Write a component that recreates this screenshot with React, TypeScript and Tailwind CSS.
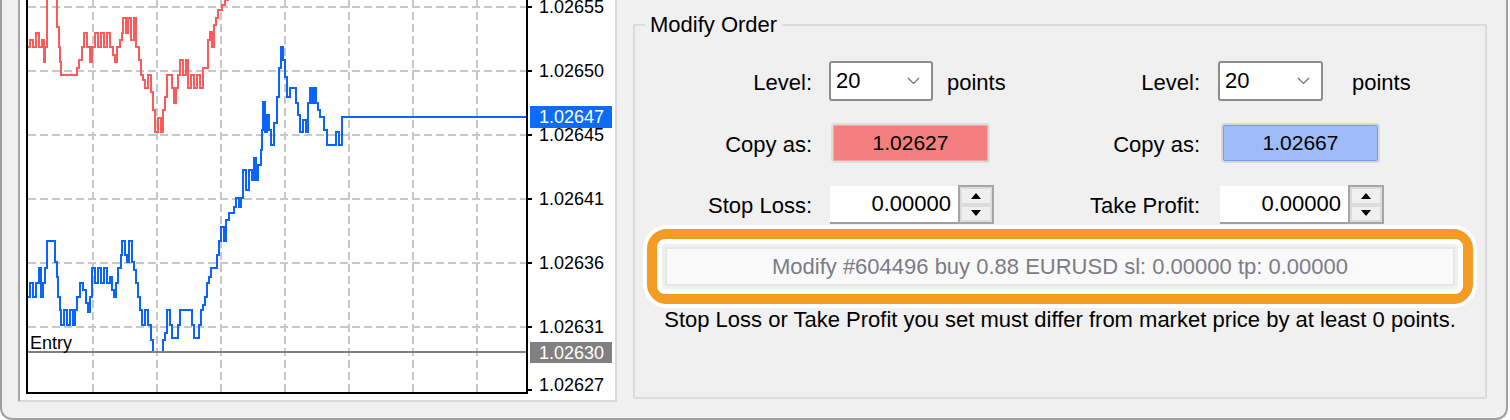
import React from "react";

type P = [number, number];

const red: P[] = [
  [27, 47], [30, 40], [33, 47], [36, 33], [39, 47], [42, 40], [44, 62], [45, 47], [47, -5], [56, -5], [57, 27], [59, 47],
  [60, 62], [61, 75], [75, 75], [77, 68], [79, 60], [82, 47], [84, 33], [87, 47], [90, 62], [92, 47], [95, 33], [98, 47],
  [101, 33], [104, 47], [107, 33], [110, 47], [113, 55], [115, 62], [117, 47], [120, 40], [122, 33], [123, 18], [126, 33],
  [128, 18], [131, 40], [134, 18], [136, 47], [139, 60], [141, 75], [143, 80], [145, 88], [148, 75], [151, 92], [153, 110],
  [155, 132], [158, 118], [161, 132], [163, 110], [165, 97], [167, 75], [170, 75], [172, 88], [174, 103], [176, 88],
  [178, 75], [180, 60], [183, 75], [186, 60], [188, 88], [191, 75], [194, 88], [197, 75], [200, 88], [203, 68], [206, 68],
  [208, 40], [210, 32], [212, 47], [214, 25], [216, 18], [218, 10], [220, 10], [222, 5], [225, 0], [228, -5],
];

const blue: P[] = [
  [27, 297], [30, 283], [33, 297], [36, 283], [39, 268], [41, 297], [43, 283], [45, 268], [47, 241], [53, 241], [55, 262],
  [57, 277], [58, 297], [60, 310], [61, 325], [64, 310], [67, 325], [70, 310], [73, 325], [75, 310], [77, 297], [80, 283],
  [83, 290], [86, 303], [88, 312], [90, 297], [92, 268], [95, 283], [98, 268], [101, 283], [104, 268], [107, 283],
  [110, 277], [112, 290], [114, 297], [116, 283], [118, 268], [121, 255], [122, 241], [125, 255], [127, 262], [129, 241],
  [132, 262], [134, 270], [136, 283], [138, 297], [140, 310], [142, 325], [145, 310], [148, 325], [151, 340], [153, 352],
  [162, 352], [163, 340], [165, 333], [167, 310], [170, 325], [172, 338], [176, 338], [178, 325], [180, 310], [190, 310],
  [192, 325], [194, 338], [197, 338], [199, 325], [201, 310], [203, 305], [205, 297], [207, 283], [209, 277], [211, 268],
  [215, 268], [217, 255], [219, 241], [221, 227], [224, 241], [226, 220], [229, 213], [232, 213], [234, 207], [236, 198],
  [239, 207], [241, 198], [243, 170], [246, 190], [249, 170], [252, 180], [254, 158], [256, 180], [258, 165], [261, 150],
  [262, 130], [263, 102], [265, 132], [267, 115], [269, 130], [271, 145], [274, 123], [277, 97], [279, 68], [281, 47],
  [283, 60], [285, 77], [287, 97], [290, 88], [294, 88], [296, 103], [298, 115], [300, 132], [303, 120], [306, 132],
  [308, 103], [310, 88], [312, 103], [314, 88], [316, 103], [318, 110], [320, 117], [324, 130], [327, 145], [333, 145],
  [336, 132], [339, 145], [342, 117], [527, 117],
];

function stepPath(pts: P[]) {
  let d = `M${pts[0][0]} ${pts[0][1]}`;
  for (let i = 1; i < pts.length; i++) d += ` H${pts[i][0]} V${pts[i][1]}`;
  return d;
}

const gridX = [93, 157, 221, 285, 349, 413, 477];
const gridY = [7, 71, 135, 199, 263, 327];
const labels: [string, number][] = [
  ["1.02655", 7],
  ["1.02650", 71],
  ["1.02645", 135],
  ["1.02641", 199],
  ["1.02636", 263],
  ["1.02631", 327],
  ["1.02627", 385],
];

function Chart() {
  return (
    <svg
      width={595}
      height={400}
      viewBox="20 0 595 400"
      className="block font-[family-name:'Liberation_Sans',Arial,sans-serif] text-[18px]"
      shapeRendering="crispEdges"
    >
      <rect x={20} y={0} width={595} height={400} fill="#fff" />
      {gridX.map((x) => (
        <line key={x} x1={x} y1={0} x2={x} y2={392} stroke="#c8c8c8" strokeWidth={2} strokeDasharray="8 4" />
      ))}
      {gridY.map((y) => (
        <line key={y} x1={28} y1={y} x2={526} y2={y} stroke="#c8c8c8" strokeWidth={2} strokeDasharray="8 4" />
      ))}
      <path d={stepPath(red)} fill="none" stroke="#fb5b5b" strokeWidth={2} />
      <path d={stepPath(blue)} fill="none" stroke="#0a64ff" strokeWidth={2} />
      <line x1={28} y1={352} x2={526} y2={352} stroke="#808080" strokeWidth={2} />
      <text x={30} y={349} fill="#000">Entry</text>
      <path d="M27 -2 V393 H527 V-2" fill="none" stroke="#000" strokeWidth={2} />
      {[...gridY, 390].map((y) => (
        <line key={`t${y}`} x1={528} y1={y} x2={532} y2={y} stroke="#000" strokeWidth={2} />
      ))}
      {labels.map(([t, y]) => (
        <text key={t} x={539} y={y} dominantBaseline="central" fill="#000">
          {t}
        </text>
      ))}
      <rect x={530} y={106} width={82} height={22} fill="#0b6cf7" />
      <text x={539} y={117} dominantBaseline="central" fill="#fff">
        1.02647
      </text>
      <rect x={530} y={342} width={82} height={21} fill="#808080" />
      <text x={539} y={352.5} dominantBaseline="central" fill="#fff">
        1.02630
      </text>
    </svg>
  );
}

function Chevron() {
  return (
    <svg width="13" height="8" viewBox="0 0 13 8" className="block">
      <path d="M1 1 L6.5 6.5 L12 1" fill="none" stroke="#707070" strokeWidth="1.2" />
    </svg>
  );
}

function Dropdown({ w }: { w: string }) {
  return (
    <div className={`${w} h-[40px] shrink-0 border-2 border-[#8c8c8c] rounded-[3px] bg-white flex items-center justify-between pl-[5px] pr-[11px]`}>
      <span className="leading-[26px]">20</span>
      <Chevron />
    </div>
  );
}

function Spinner() {
  return (
    <div className="w-[36px] h-[39px] shrink-0 border-2 border-[#a6a6a6] bg-[#e6e6e6] flex flex-col">
      <div className="flex-1 border-2 border-[#dcdcdc] bg-[#f0f0f0] flex items-center justify-center">
        <svg width="10" height="6" viewBox="0 0 10 6" className="block">
          <path d="M0 6 L5 0 L10 6 Z" fill="#000" />
        </svg>
      </div>
      <div className="flex-1 border-2 border-[#dcdcdc] bg-[#f0f0f0] flex items-center justify-center">
        <svg width="10" height="6" viewBox="0 0 10 6" className="block">
          <path d="M0 0 L5 6 L10 0 Z" fill="#000" />
        </svg>
      </div>
    </div>
  );
}

function NumInput() {
  return (
    <div className="flex items-start shrink-0">
      <div className="w-[128px] h-[38px] mt-[1px] bg-white border-b-2 border-[#a0a0a0] flex items-center justify-end pr-[7px]">
        <span className="leading-[26px]">0.00000</span>
      </div>
      <Spinner />
    </div>
  );
}

export default function App() {
  return (
    <div className="w-[1508px] h-[420px] overflow-hidden bg-[#f0f0f0] border-x-2 border-b-2 border-[#a0a0a0] rounded-b-[12px] flex pl-[16px] text-[#000] text-[22px] font-[family-name:'Liberation_Sans',Arial,sans-serif]">
      {/* chart panel */}
      <div className="w-[599px] h-[402px] shrink-0 bg-white border-l-2 border-l-[#a6a6a6] border-r-2 border-r-[#dadada] border-b-2 border-b-[#dadada]">
        <Chart />
      </div>

      {/* right panel */}
      <div className="flex-1 pt-[12px] pl-[16px] pr-[19px]">
        <fieldset className="border-2 border-[#dcdcdc] pb-[64px]">
          <legend className="ml-[10px] px-[5px] leading-[26px]">Modify Order</legend>

          {/* Row 1 */}
          <div className="flex items-center h-[40px] mt-[23px]">
            <div className="w-[177px] shrink-0 text-right leading-[26px] pt-[3px]">Level:</div>
            <div className="w-[198px] shrink-0 flex items-center pl-[17px]">
              <Dropdown w="w-[104px]" />
              <span className="ml-[14px] leading-[26px] pt-[3px]">points</span>
            </div>
            <div className="w-[190px] shrink-0 text-right leading-[26px] pt-[3px]">Level:</div>
            <div className="flex items-center pl-[18px]">
              <Dropdown w="w-[105px]" />
              <span className="ml-[29px] leading-[26px] pt-[3px]">points</span>
            </div>
          </div>

          {/* Row 2 */}
          <div className="flex items-center h-[40px] mt-[22px]">
            <div className="w-[177px] shrink-0 text-right leading-[26px] pt-[3px]">Copy as:</div>
            <div className="w-[198px] shrink-0 flex items-center pl-[19px]">
              <div className="w-[159px] h-[40px] rounded-[4px] border-2 border-[#dddddd] bg-[#f57e7e] shadow-[inset_0_0_0_1px_#f6a3a3] flex items-center justify-center">
                <span className="leading-[26px] text-[21px]">1.02627</span>
              </div>
            </div>
            <div className="w-[190px] shrink-0 text-right leading-[26px] pt-[3px]">Copy as:</div>
            <div className="flex items-center pl-[21px]">
              <div className="w-[159px] h-[40px] rounded-[4px] border-2 border-[#d8d8d8] bg-[#9ebdf8] shadow-[inset_0_0_0_1px_#6f9bec] flex items-center justify-center">
                <span className="leading-[26px] text-[21px]">1.02667</span>
              </div>
            </div>
          </div>

          {/* Row 3 */}
          <div className="flex items-start h-[39px] mt-[22px]">
            <div className="w-[177px] shrink-0 text-right leading-[26px] h-[39px] flex items-center justify-end pt-[2px]">Stop Loss:</div>
            <div className="w-[198px] shrink-0 flex pl-[18px]">
              <NumInput />
            </div>
            <div className="w-[190px] shrink-0 text-right leading-[26px] h-[39px] flex items-center justify-end pt-[2px]">Take Profit:</div>
            <div className="flex pl-[20px]">
              <NumInput />
            </div>
          </div>

          {/* Row 4: highlighted button */}
          <div className="mx-[8px] mt-[1px] border-4 border-white rounded-[24px]">
            <div className="border-[10px] border-[#f39c24] rounded-[20px]">
              <div className="border-[5px] border-white rounded-[8px] bg-[#f0f0f0] p-[3px]">
                <div className="h-[39px] bg-[#f9f9f9] border-2 border-[#e6e6e6] flex items-center justify-center">
                  <span className="leading-[26px] text-[#7c7c86]">Modify #604496 buy 0.88 EURUSD sl: 0.00000 tp: 0.00000</span>
                </div>
              </div>
            </div>
          </div>

          {/* Row 5 */}
          <div className="mt-[-1px] text-center leading-[26px]">
            Stop Loss or Take Profit you set must differ from market price by at least 0 points.
          </div>
        </fieldset>
      </div>
    </div>
  );
}
